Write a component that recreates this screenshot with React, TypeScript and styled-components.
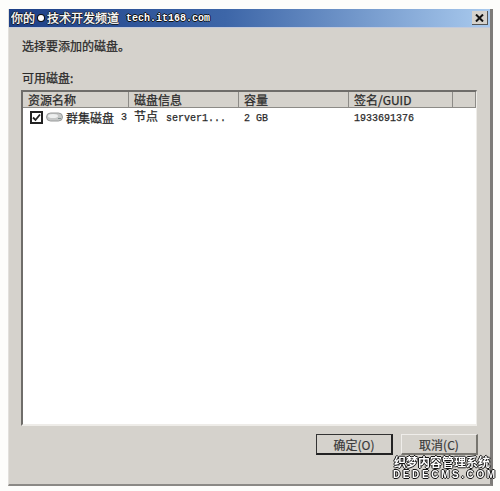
import React from 'react';
import styled, { createGlobalStyle } from 'styled-components';

const GlobalStyle = createGlobalStyle`
  html, body {
    margin: 0;
    padding: 0;
    background: #fdfdfb;
  }
`;

const cjk = `"Noto Sans CJK SC", "Liberation Sans", sans-serif`;
const mono = `"Liberation Mono", "Noto Sans CJK SC", monospace`;

const Page = styled.div`
  width: 500px;
  height: 491px;
  padding: 9px 7px 5px 8px;
  box-sizing: border-box;
  filter: blur(0.45px);
`;

const Dialog = styled.div`
  position: relative;
  height: 100%;
  box-sizing: border-box;
  display: flex;
  flex-direction: column;
  background: #d5d2cc;
  border-left: 1px solid #e2e0dc;
  border-right: 3px solid #7d7b78;
  border-bottom: 2px solid #8b8985;
`;

const TitleBar = styled.div`
  height: 18px;
  flex: none;
  display: flex;
  align-items: center;
  justify-content: space-between;
  padding: 0 2px 0 2px;
  background: linear-gradient(90deg, #1d3f86 0%, #3d66a8 45%, #a9caee 100%);
`;

const TitleText = styled.div`
  display: flex;
  align-items: center;
  color: #fff;
  font-family: ${cjk};
  font-size: 12px;
  line-height: 18px;
  -webkit-text-stroke: 0.3px #fff;
  text-shadow: 1px 0 0 #111, -1px 0 0 #111, 0 1px 0 #111, 0 -1px 0 #111;
  white-space: pre;
`;

const TitleBullet = styled.span`
  width: 6px;
  height: 6px;
  margin: 0 3px;
  border-radius: 50%;
  background: #fff;
  box-shadow: 0 0 0 1px #111;
`;

const TitleUrl = styled.span`
  margin-left: 7px;
  padding-top: 1px;
  font-family: ${mono};
  font-size: 10px;
  font-weight: bold;
  -webkit-text-stroke: 0;
`;

const CloseButton = styled.div`
  width: 15px;
  height: 13px;
  display: flex;
  align-items: center;
  justify-content: center;
  background: #d5d2cc;
  border-right: 1px solid #555;
  border-bottom: 1px solid #555;
`;

const Body = styled.div`
  flex: 1;
  display: flex;
  flex-direction: column;
  padding: 9px 12px 0 12px;
  border-top: 1px solid #c3cadb;
  min-height: 0;
`;

const Label = styled.div<{ $gap?: number }>`
  color: #2a2a2a;
  font-family: ${cjk};
  font-size: 12px;
  line-height: 18px;
  padding-left: 1px;
  -webkit-text-stroke: 0.25px #2a2a2a;
  margin-bottom: ${({ $gap }) => $gap ?? 0}px;
`;

const ListBox = styled.div`
  width: 456px;
  height: 336px;
  flex: none;
  margin-top: 3px;
  box-sizing: border-box;
  background: #fff;
  border-top: 2px solid #6f6d6a;
  border-left: 2px solid #6f6d6a;
  border-right: 1px solid #eeece8;
  border-bottom: 2px solid #eeece8;
`;

const Columns = styled.div`
  display: grid;
  grid-template-columns: 106px 110px 110px 104px 1fr;
  color: #2a2a2a;
  font-family: ${cjk};
  font-size: 12px;
`;

const HeaderRow = styled(Columns)`
  height: 15px;
  background: #d5d2cc;
`;

const HeaderCell = styled.div`
  padding-left: 5px;
  line-height: 15px;
  border-right: 1px solid #8d8b87;
  border-bottom: 1px solid #8d8b87;
  box-sizing: border-box;
  white-space: nowrap;
  -webkit-text-stroke: 0.25px #2a2a2a;
`;

const Row = styled(Columns)`
  height: 17px;
  align-items: center;
  line-height: 17px;
  background: #fff;
`;

const Cell = styled.div`
  padding-left: 5px;
  white-space: nowrap;
  -webkit-text-stroke: 0.25px #2a2a2a;
`;

const NameCell = styled(Cell)`
  display: flex;
  align-items: center;
  padding-left: 7px;
  gap: 3px;
`;

const Latin = styled.span<{ $gap?: number }>`
  font-family: ${mono};
  font-size: 10px;
  margin-left: ${({ $gap }) => $gap ?? 0}px;
`;

const Checkbox = styled.div`
  width: 9px;
  height: 9px;
  flex: none;
  display: flex;
  align-items: center;
  justify-content: center;
  border: 2px solid #222;
  background: #fff;
`;

const Footer = styled.div`
  display: flex;
  justify-content: flex-end;
  gap: 8px;
  margin-top: 8px;
`;

const Button = styled.div<{ $primary?: boolean }>`
  width: 77px;
  height: 21px;
  box-sizing: border-box;
  display: flex;
  align-items: center;
  justify-content: center;
  color: #3a3a3a;
  font-family: ${cjk};
  font-size: 12px;
  -webkit-text-stroke: 0.2px #3a3a3a;
  background: #d5d2cc;
  border-top: 1px solid ${({ $primary }) => ($primary ? '#333' : '#efedea')};
  border-left: 1px solid ${({ $primary }) => ($primary ? '#333' : '#efedea')};
  border-right: 2px solid ${({ $primary }) => ($primary ? '#222' : '#77756f')};
  border-bottom: 2px solid ${({ $primary }) => ($primary ? '#222' : '#77756f')};
`;

const Watermark = styled.div`
  position: absolute;
  right: -1px;
  bottom: 3px;
  width: 98px;
  color: #fff;
  text-align: center;
  text-shadow: 1px 0 0 #111, -1px 0 0 #111, 0 1px 0 #111, 0 -1px 0 #111;
`;

const WatermarkName = styled.div`
  font-family: ${cjk};
  font-size: 12px;
  line-height: 13px;
  font-weight: bold;
`;

const WatermarkSite = styled.div`
  font-family: "Liberation Sans", sans-serif;
  font-size: 10px;
  line-height: 13px;
  font-weight: bold;
  letter-spacing: 2.6px;
`;

const CheckMark = () => (
  <svg width="9" height="9" viewBox="0 0 9 9">
    <path d="M1 4.5 L3.5 7 L8 1.5" fill="none" stroke="#222" strokeWidth="1.8" />
  </svg>
);

const DiskIcon = () => (
  <svg width="17" height="10" viewBox="0 0 17 10">
    <rect x="0.5" y="1" width="16" height="8" rx="4" fill="#c6c8c8" stroke="#9a9c9c" />
    <ellipse cx="7" cy="4" rx="5" ry="2" fill="#eef0f0" />
    <rect x="12" y="6" width="3" height="1" fill="#7f8f8f" />
  </svg>
);

const CloseIcon = () => (
  <svg width="9" height="8" viewBox="0 0 9 8">
    <path d="M1 0.5 L8 7.5 M8 0.5 L1 7.5" stroke="#111" strokeWidth="2" />
  </svg>
);

const headers = ['资源名称', '磁盘信息', '容量', '签名/GUID', ''];

const App: React.FC = () => {
  return (
    <Page>
      <GlobalStyle />
      <Dialog>
        <TitleBar>
          <TitleText>
            你的
            <TitleBullet />
            技术开发频道
            <TitleUrl>tech.it168.com</TitleUrl>
          </TitleText>
          <CloseButton>
            <CloseIcon />
          </CloseButton>
        </TitleBar>
        <Body>
          <Label $gap={14}>选择要添加的磁盘。</Label>
          <Label>可用磁盘:</Label>
          <ListBox>
            <HeaderRow>
              {headers.map((h, i) => (
                <HeaderCell key={i}>{h}</HeaderCell>
              ))}
            </HeaderRow>
            <Row>
              <NameCell>
                <Checkbox>
                  <CheckMark />
                </Checkbox>
                <DiskIcon />
                <span>群集磁盘</span>
                <Latin $gap={4}>3</Latin>
              </NameCell>
              <Cell>
                节点<Latin $gap={8}>server1...</Latin>
              </Cell>
              <Cell>
                <Latin>2 GB</Latin>
              </Cell>
              <Cell>
                <Latin>1933691376</Latin>
              </Cell>
            </Row>
          </ListBox>
          <Footer>
            <Button $primary>确定(O)</Button>
            <Button>取消(C)</Button>
          </Footer>
        </Body>
        <Watermark>
          <WatermarkName>织梦内容管理系统</WatermarkName>
          <WatermarkSite>DEDECMS.COM</WatermarkSite>
        </Watermark>
      </Dialog>
    </Page>
  );
};

export default App;
